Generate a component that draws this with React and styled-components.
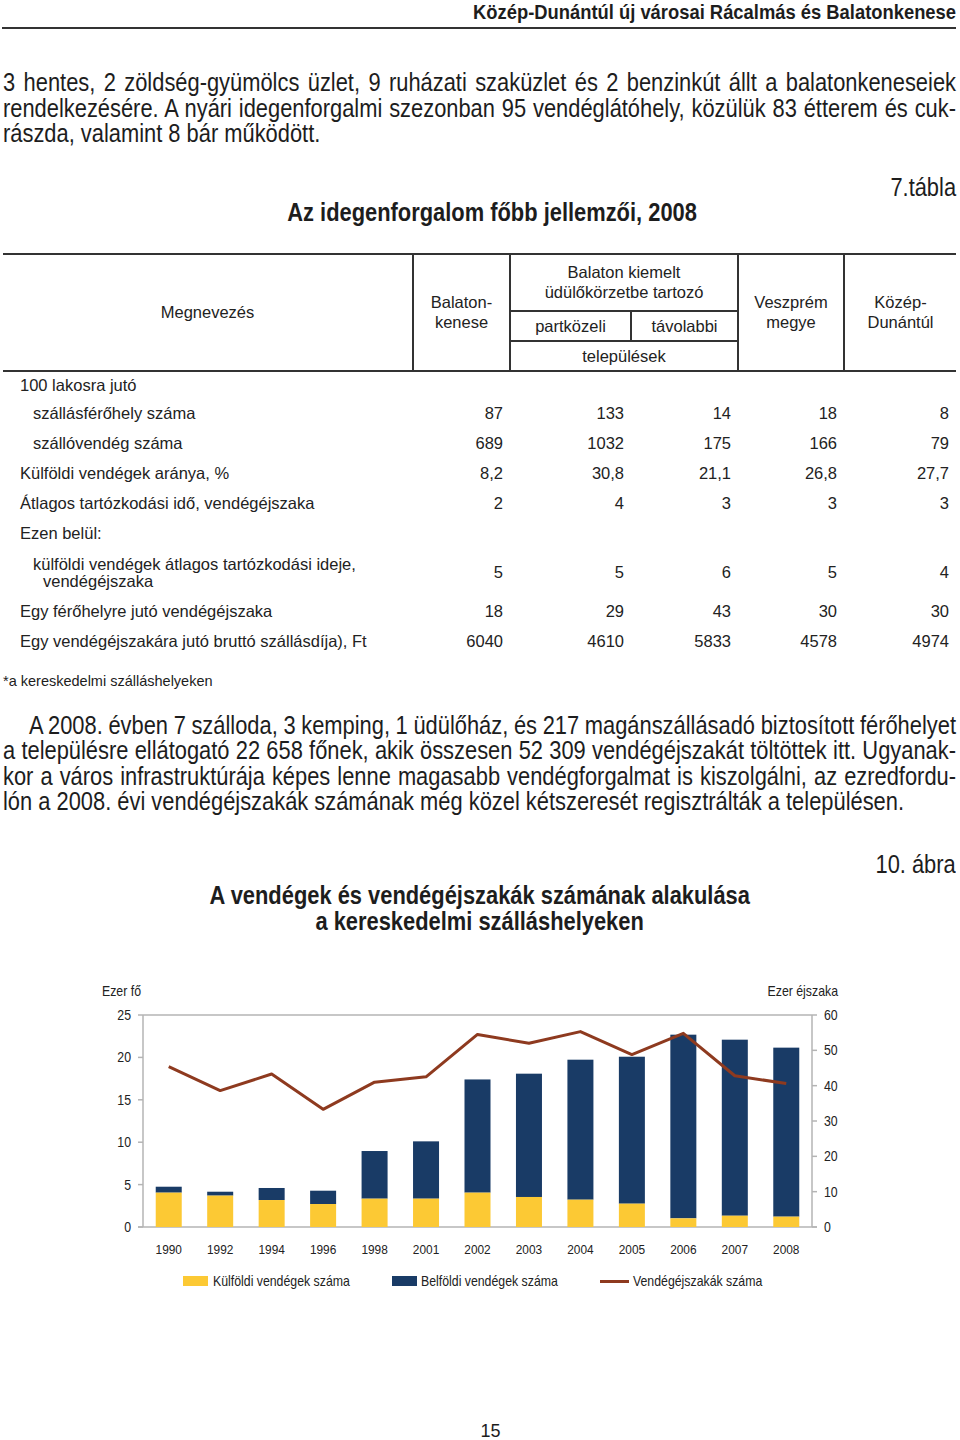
import React from 'react';
import styled, { createGlobalStyle } from 'styled-components';

const SANS = '"Liberation Sans", Arial, sans-serif';
// no narrow face is installed, so the condensed print type is a squeezed Liberation Sans
const SQUEEZE = 0.875;
const TEXT_W = 953;

const GlobalStyle = createGlobalStyle`
  html, body {
    margin: 0;
    padding: 0;
    background: #fff;
    overflow-x: hidden;
  }
  body {
    font-family: ${SANS};
    color: #1d1d1d;
  }
`;

const Page = styled.div`
  width: 960px;
  box-sizing: border-box;
  padding: 0 4px 0 3px;
`;

const Squeezed = styled.span`
  display: inline-block;
  white-space: nowrap;
  transform: scaleX(${SQUEEZE});
  transform-origin: ${(p) => p.$origin || 'center'} top;
`;

const RunningHead = styled.div`
  margin-left: -1px;
  padding: 0 0 3px;
  border-bottom: 2px solid #333;
  font-weight: bold;
  font-size: 21px;
  line-height: 24px;
  text-align: right;
`;

const Paragraph = styled.div`
  margin-top: ${(p) => p.$top}px;
  width: ${TEXT_W}px;
  font-size: 25px;
  line-height: 25.5px;
`;

const Line = styled.div`
  box-sizing: border-box;
  width: ${TEXT_W / SQUEEZE}px;
  margin-right: ${TEXT_W - TEXT_W / SQUEEZE}px;
  transform: scaleX(${SQUEEZE});
  transform-origin: left top;
  white-space: nowrap;
  word-spacing: ${(p) => (p.$last ? 0 : -3)}px;
  text-align: ${(p) => (p.$last ? 'left' : 'justify')};
  text-align-last: ${(p) => (p.$last ? 'left' : 'justify')};
  padding-left: ${(p) => (p.$indent ? 26 / SQUEEZE : 0)}px;
`;

const Label = styled.div`
  margin-top: ${(p) => p.$top}px;
  font-size: 25px;
  line-height: 24px;
  text-align: right;
`;

const Title = styled.div`
  margin-top: ${(p) => p.$top}px;
  padding-left: ${(p) => p.$shift || 0}px;
  font-weight: bold;
  font-size: 25px;
  line-height: 26px;
  text-align: center;
`;

const Table = styled.table`
  margin-top: 28px;
  width: 953px;
  border-collapse: collapse;
  table-layout: fixed;
  font-size: 16.5px;
  color: #222;
`;

const Head = styled.th`
  font-weight: normal;
  text-align: center;
  vertical-align: middle;
  line-height: 20px;
  height: ${(p) => p.$h || 28}px;
  padding: 0;
  border-left: ${(p) => (p.$first ? 'none' : '2px solid #333')};
  border-top: 2px solid #333;
  border-bottom: 2px solid #333;
`;

const Cell = styled.td`
  height: ${(p) => p.$h || 30}px;
  padding: 0 7px 0 0;
  text-align: right;
  vertical-align: middle;
  line-height: 17px;
  white-space: nowrap;
`;

const NameCell = styled.td`
  padding: 0 0 0 ${(p) => (p.$level ? 40 : 17)}px;
  text-indent: ${(p) => (p.$level ? -10 : 0)}px;
  vertical-align: middle;
  line-height: 17px;
  height: ${(p) => p.$h || 30}px;
`;

const Note = styled.div`
  margin-top: 15px;
  font-size: 14.5px;
  line-height: 18px;
`;

const ChartBox = styled.div`
  margin-top: 44px;
  margin-left: -3px;
  height: 315px;
`;

const PageNumber = styled.div`
  margin-top: 131px;
  text-align: center;
  padding-left: 22px;
  font-size: 18px;
  line-height: 14px;
`;

const YELLOW = '#fcc934';
const NAVY = '#193b66';
const BROWN = '#8e3a1f';
const AXIS = '#b4b4b4';

const rows = [
  { name: '100 lakosra jutó', level: 0, h: 27 },
  { name: 'szállásférőhely száma', level: 1, v: ['87', '133', '14', '18', '8'] },
  { name: 'szállóvendég száma', level: 1, v: ['689', '1032', '175', '166', '79'] },
  { name: 'Külföldi vendégek aránya, %', level: 0, v: ['8,2', '30,8', '21,1', '26,8', '27,7'] },
  { name: 'Átlagos tartózkodási idő, vendégéjszaka', level: 0, v: ['2', '4', '3', '3', '3'] },
  { name: 'Ezen belül:', level: 0 },
  {
    name: 'külföldi vendégek átlagos tartózkodási ideje, vendégéjszaka',
    level: 1,
    h: 48,
    v: ['5', '5', '6', '5', '4'],
  },
  { name: 'Egy férőhelyre jutó vendégéjszaka', level: 0, v: ['18', '29', '43', '30', '30'] },
  { name: 'Egy vendégéjszakára jutó bruttó szállásdíja), Ft', level: 0, v: ['6040', '4610', '5833', '4578', '4974'] },
];

const chart = [
  { year: '1990', foreign: 4.05, total: 4.75, nights: 45.4 },
  { year: '1992', foreign: 3.7, total: 4.16, nights: 38.6 },
  { year: '1994', foreign: 3.18, total: 4.6, nights: 43.3 },
  { year: '1996', foreign: 2.71, total: 4.28, nights: 33.3 },
  { year: '1998', foreign: 3.34, total: 8.96, nights: 41.0 },
  { year: '2001', foreign: 3.34, total: 10.1, nights: 42.5 },
  { year: '2002', foreign: 4.05, total: 17.4, nights: 54.5 },
  { year: '2003', foreign: 3.54, total: 18.08, nights: 52.0 },
  { year: '2004', foreign: 3.22, total: 19.73, nights: 55.3 },
  { year: '2005', foreign: 2.75, total: 20.08, nights: 48.8 },
  { year: '2006', foreign: 1.02, total: 22.68, nights: 54.8 },
  { year: '2007', foreign: 1.33, total: 22.09, nights: 42.8 },
  { year: '2008', foreign: 1.22, total: 21.15, nights: 40.6 },
];

// chart label: condensed like the print, drawn at (x, y)
function T({ x, y, anchor = 'start', size = 14, children }) {
  return (
    <text
      transform={`translate(${x} ${y}) scale(0.88 1)`}
      textAnchor={anchor}
      fontFamily={SANS}
      fontSize={size}
      fill="#222"
    >
      {children}
    </text>
  );
}

function GuestChart() {
  const left = 143;
  const right = 812;
  const top = 37;
  const bottom = 249;
  const h = bottom - top;
  const step = (right - left) / chart.length;
  const yl = (v) => bottom - (v / 25) * h;
  const yr = (v) => bottom - (v / 60) * h;
  const cx = (i) => left + step * (i + 0.5);

  return (
    <svg width="960" height="315" viewBox="0 0 960 315">
      <T x={102} y={18}>Ezer fő</T>
      <T x={838} y={18} anchor="end">Ezer éjszaka</T>

      <line x1={left} y1={top} x2={right} y2={top} stroke={AXIS} strokeWidth="1.5" />
      <line x1={left} y1={top} x2={left} y2={bottom} stroke={AXIS} strokeWidth="1.5" />
      <line x1={right} y1={top} x2={right} y2={bottom} stroke={AXIS} strokeWidth="1.5" />
      <line x1={left - 5} y1={bottom} x2={right + 5} y2={bottom} stroke={AXIS} strokeWidth="1.5" />

      {[0, 5, 10, 15, 20, 25].map((v) => (
        <g key={`l${v}`}>
          <line x1={left - 5} y1={yl(v)} x2={left} y2={yl(v)} stroke={AXIS} strokeWidth="1.5" />
          <T x={131} y={yl(v) + 5} anchor="end" size={14}>{v}</T>
        </g>
      ))}
      {[0, 10, 20, 30, 40, 50, 60].map((v) => (
        <g key={`r${v}`}>
          <line x1={right} y1={yr(v)} x2={right + 5} y2={yr(v)} stroke={AXIS} strokeWidth="1.5" />
          <T x={824} y={yr(v) + 5} size={14}>{v}</T>
        </g>
      ))}

      {chart.map((d, i) => (
        <g key={d.year}>
          <rect x={cx(i) - 13} y={yl(d.total)} width="26" height={yl(d.foreign) - yl(d.total)} fill={NAVY} />
          <rect x={cx(i) - 13} y={yl(d.foreign)} width="26" height={bottom - yl(d.foreign)} fill={YELLOW} />
          <T x={cx(i)} y={276} anchor="middle" size={13.5}>{d.year}</T>
        </g>
      ))}

      <polyline
        points={chart.map((d, i) => `${cx(i)},${yr(d.nights)}`).join(' ')}
        fill="none"
        stroke={BROWN}
        strokeWidth="3"
        strokeLinejoin="round"
      />

      <rect x="183" y="298" width="25" height="10" fill={YELLOW} />
      <T x={213} y={308}>Külföldi vendégek száma</T>
      <rect x="392" y="298" width="25" height="10" fill={NAVY} />
      <T x={421} y={308}>Belföldi vendégek száma</T>
      <rect x="600" y="302" width="29" height="3" fill={BROWN} />
      <T x={633} y={308}>Vendégéjszakák száma</T>
    </svg>
  );
}

export default function App() {
  return (
    <Page>
      <GlobalStyle />
      <RunningHead>
        <Squeezed $origin="right">Közép-Dunántúl új városai Rácalmás és Balatonkenese</Squeezed>
      </RunningHead>

      <Paragraph $top={41}>
        <Line>3 hentes, 2 zöldség-gyümölcs üzlet, 9 ruházati szaküzlet és 2 benzinkút állt a balatonkeneseiek</Line>
        <Line>rendelkezésére. A nyári idegenforgalmi szezonban 95 vendéglátóhely, közülük 83 étterem és cuk-</Line>
        <Line $last>rászda, valamint 8 bár működött.</Line>
      </Paragraph>

      <Label $top={28}>
        <Squeezed $origin="right">7.tábla</Squeezed>
      </Label>
      <Title $top={0} $shift={25}>
        <Squeezed>Az idegenforgalom főbb jellemzői, 2008</Squeezed>
      </Title>

      <Table>
        <colgroup>
          <col style={{ width: 410 }} />
          <col style={{ width: 97 }} />
          <col style={{ width: 121 }} />
          <col style={{ width: 107 }} />
          <col style={{ width: 106 }} />
          <col style={{ width: 112 }} />
        </colgroup>
        <thead>
          <tr>
            <Head $first rowSpan={3}>Megnevezés</Head>
            <Head rowSpan={3}>Balaton-<br />kenese</Head>
            <Head colSpan={2} $h={55}>Balaton kiemelt<br />üdülőkörzetbe tartozó</Head>
            <Head rowSpan={3}>Veszprém<br />megye</Head>
            <Head rowSpan={3}>Közép-<br />Dunántúl</Head>
          </tr>
          <tr>
            <Head $h={28}>partközeli</Head>
            <Head $h={28}>távolabbi</Head>
          </tr>
          <tr>
            <Head colSpan={2} $h={28}>települések</Head>
          </tr>
        </thead>
        <tbody>
          {rows.map((r) => (
            <tr key={r.name}>
              <NameCell $level={r.level} $h={r.h}>{r.name}</NameCell>
              {[0, 1, 2, 3, 4].map((k) => (
                <Cell key={k} $h={r.h}>{r.v ? r.v[k] : ''}</Cell>
              ))}
            </tr>
          ))}
        </tbody>
      </Table>

      <Note>*a kereskedelmi szálláshelyeken</Note>

      <Paragraph $top={23}>
        <Line $indent>A 2008. évben 7 szálloda, 3 kemping, 1 üdülőház, és 217 magánszállásadó biztosított férőhelyet</Line>
        <Line>a településre ellátogató 22 658 főnek, akik összesen 52 309 vendégéjszakát töltöttek itt. Ugyanak-</Line>
        <Line>kor a város infrastruktúrája képes lenne magasabb vendégforgalmat is kiszolgálni, az ezredfordu-</Line>
        <Line $last>lón a 2008. évi vendégéjszakák számának még közel kétszeresét regisztrálták a településen.</Line>
      </Paragraph>

      <Label $top={37}>
        <Squeezed $origin="right">10. ábra</Squeezed>
      </Label>
      <Title $top={6}>
        <Squeezed>A vendégek és vendégéjszakák számának alakulása</Squeezed>
        <br />
        <Squeezed>a kereskedelmi szálláshelyeken</Squeezed>
      </Title>

      <ChartBox>
        <GuestChart />
      </ChartBox>

      <PageNumber>15</PageNumber>
    </Page>
  );
}
